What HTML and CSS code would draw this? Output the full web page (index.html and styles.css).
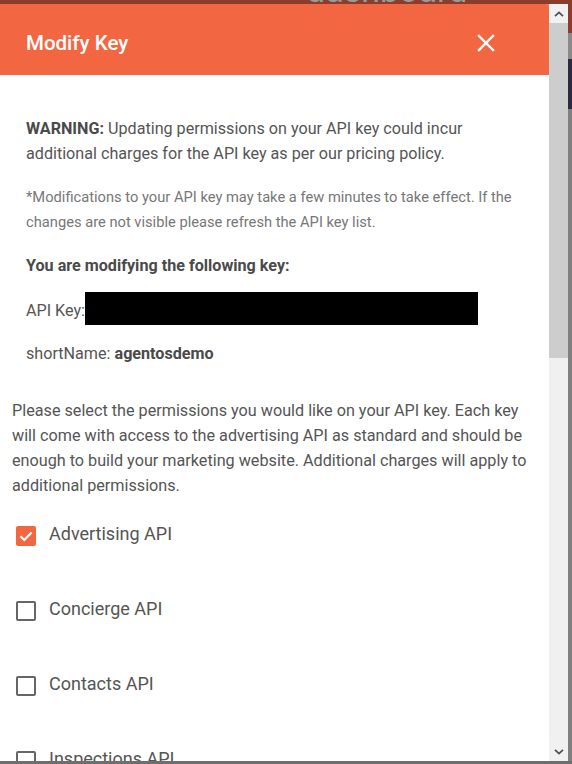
FILE: index.html
```html
<!DOCTYPE html>
<html>
<head>
<meta charset="utf-8">
<link rel="stylesheet" href="styles.css">
</head>
<body>
<div class="topstrip"><span class="bgtext">dashboard</span></div>
<div class="stage">
  <div class="modal">
    <div class="header">
      <h1 class="title">Modify Key</h1>
      <svg class="close" width="18" height="18" viewBox="0 0 18 18"><path d="M2 2 L16 16 M16 2 L2 16" stroke="#fff" stroke-width="2.4" stroke-linecap="square"/></svg>
    </div>
    <div class="body">
      <div class="info">
        <p class="warn"><b>WARNING:</b> Updating permissions on your API key could incur additional charges for the API key as per our pricing policy.</p>
        <p class="note">*Modifications to your API key may take a few minutes to take effect. If the changes are not visible please refresh the API key list.</p>
        <p class="strong">You are modifying the following key:</p>
        <div class="keyrow"><span>API Key:</span><span class="redact"></span></div>
        <p class="short">shortName: <b>agentosdemo</b></p>
      </div>
      <p class="intro">Please select the permissions you would like on your API key. Each key will come with access to the advertising API as standard and should be enough to build your marketing website. Additional charges will apply to additional permissions.</p>
      <ul class="perms">
        <li class="perm"><span class="box checked"><svg width="20" height="20" viewBox="0 0 20 20"><path d="M4.5 10.2 L8.3 14 L15.6 6.4" fill="none" stroke="#fff" stroke-width="2.2"/></svg></span>Advertising API</li>
        <li class="perm"><span class="box"></span>Concierge API</li>
        <li class="perm"><span class="box"></span>Contacts API</li>
        <li class="perm"><span class="box"></span>Inspections API</li>
      </ul>
    </div>
  </div>
  <div class="scrollbar">
    <div class="sbtn"><svg width="10" height="6" viewBox="0 0 10 6"><path d="M1 5.2 L5 1.4 L9 5.2" fill="none" stroke="#505050" stroke-width="1.8"/></svg></div>
    <div class="thumb"></div>
    <div class="track"></div>
    <div class="sbtn"><svg width="10" height="6" viewBox="0 0 10 6"><path d="M1 0.8 L5 4.6 L9 0.8" fill="none" stroke="#505050" stroke-width="1.8"/></svg></div>
  </div>
  <div class="edge">
    <div class="e1"></div><div class="e2"></div><div class="e3"></div><div class="e4"></div>
  </div>
</div>
<div class="bottomstrip"></div>
</body>
</html>
```

FILE: styles.css
```css
* { box-sizing: border-box; }
html, body { margin: 0; padding: 0; }
body {
  width: 572px;
  height: 764px;
  overflow: hidden;
  background: #7a7a7a;
  font-family: Roboto, "Liberation Sans", sans-serif;
}
.topstrip {
  height: 4px;
  background: #8b3d2b;
  overflow: hidden;
  padding-left: 306px;
}
.bgtext {
  display: block;
  margin-top: -23px;
  font-size: 34px;
  line-height: 26px;
  color: #9a9a9a;
}
.stage {
  display: flex;
  height: 757px;
}
.modal {
  width: 549px;
  height: 757px;
  overflow: hidden;
  background: #fff;
  border-top-right-radius: 3px;
}
.header {
  height: 71px;
  background: #f26641;
  display: flex;
  align-items: center;
  justify-content: space-between;
  padding: 7px 54px 0 26px;
}
.title {
  margin: 0;
  font-size: 20.5px;
  font-weight: 500;
  color: #fff;
}
.close { display: block; margin-top: -1px; }
.body {
  padding: 41px 12px 0 12px;
  color: #555;
}
.info { padding: 0 14px; }
p { margin: 0; }
.warn {
  font-size: 16.15px;
  line-height: 25px;
  color: #555;
}
.warn b { color: #4a4a4a; }
.note {
  margin-top: 19px;
  font-size: 14.7px;
  line-height: 25px;
  color: #777;
}
.strong {
  margin-top: 18px;
  font-size: 16.15px;
  line-height: 25px;
  font-weight: 700;
  color: #4a4a4a;
}
.keyrow {
  margin-top: 14px;
  display: flex;
  align-items: center;
  font-size: 16.15px;
  color: #555;
}
.keyrow span:first-child { padding-top: 3px; }
.redact {
  display: block;
  width: 393px;
  height: 33px;
  background: #000;
}
.short {
  margin-top: 16px;
  font-size: 16.15px;
  line-height: 25px;
  color: #555;
}
.short b { color: #4a4a4a; }
.intro {
  margin-top: 32px;
  font-size: 16.2px;
  line-height: 25px;
  color: #555;
}
.perms {
  list-style: none;
  margin: 12px 0 0 0;
  padding: 0;
}
.perm {
  height: 75px;
  display: flex;
  align-items: flex-start;
  padding-top: 13px;
  font-size: 18px;
  color: #555;
}
.box {
  width: 20px;
  height: 20px;
  margin: 3px 13px 0 4px;
  border: 2px solid #666;
  border-radius: 2px;
  flex: none;
}
.box.checked {
  border: none;
  background: #f26641;
}
.box svg { display: block; }
.scrollbar {
  width: 19px;
  height: 757px;
  display: flex;
  flex-direction: column;
  background: #f0f0f0;
}
.sbtn {
  height: 19px;
  display: flex;
  align-items: center;
  justify-content: center;
  background: #f1f1f1;
}
.thumb {
  height: 335px;
  background: #cdcdcd;
}
.track { flex: 1; background: #f0f0f0; }
.edge {
  width: 4px;
  display: flex;
  flex-direction: column;
}
.e1 { height: 29px; background: #8b3d2b; }
.e2 { height: 26px; background: #8a8a8a; }
.e3 { height: 50px; background: #2b2b40; }
.e4 { flex: 1; background: #808080; }
.bottomstrip {
  height: 3px;
  background: #6e6e6e;
}
```
